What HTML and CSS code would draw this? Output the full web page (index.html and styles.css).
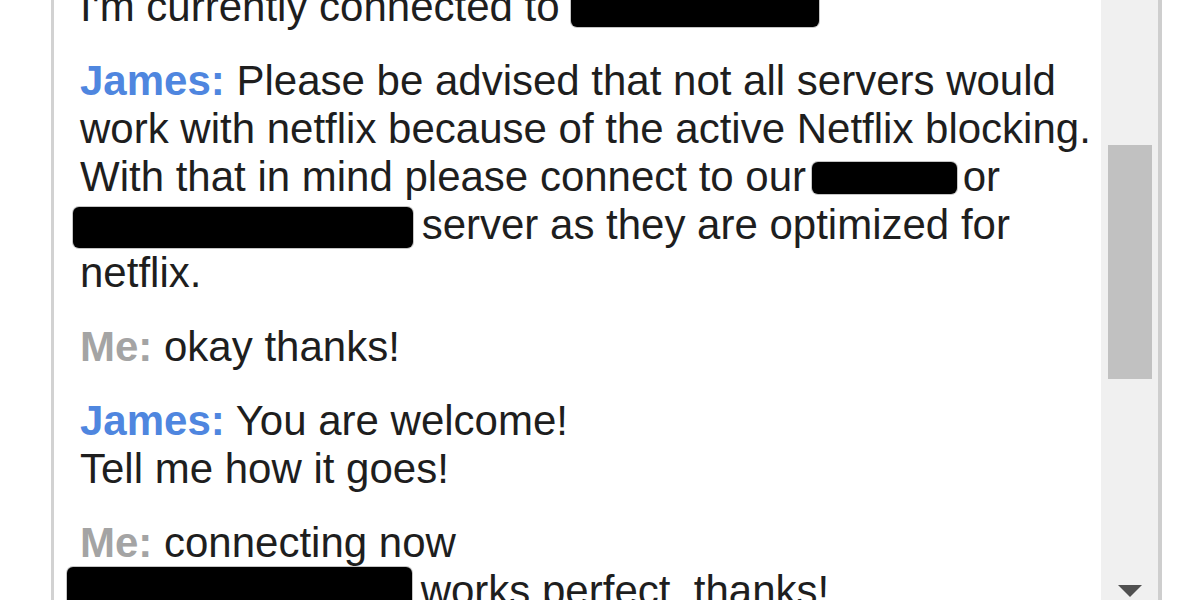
FILE: index.html
```html
<!DOCTYPE html>
<html lang="en">
<head>
<meta charset="utf-8">
<title>Chat</title>
<link rel="stylesheet" href="styles.css">
</head>
<body>
<div class="window">
  <div class="chat">
    <div class="messages">
      <p class="msg">I'm currently connected to <span class="redact r1"></span></p>
      <p class="msg"><b class="agent">James:</b> Please be advised that not all servers would<br>work with netflix because of the active Netflix blocking.<br>With that in mind please connect to our <span class="redact r3"></span>or<br><span class="redact r4"></span> server as they are optimized for<br>netflix.</p>
      <p class="msg"><b class="me">Me:</b> okay thanks!</p>
      <p class="msg"><b class="agent">James:</b> You are welcome!<br>Tell me how it goes!</p>
      <p class="msg"><b class="me">Me:</b> connecting now<br><span class="redact r5"></span> works perfect, thanks!</p>
    </div>
  </div>
  <div class="scrollbar">
    <div class="thumb"></div>
    <div class="arrow-down"></div>
  </div>
</div>
</body>
</html>
```

FILE: styles.css
```css
html, body {
  margin: 0;
  padding: 0;
  background: #ffffff;
  overflow: hidden;
}

.window {
  display: flex;
  height: 600px;
  width: 1111px;
  margin-left: 51px;
  border-left: 3px solid #d2d2d2;
  border-right: 4px solid #cecece;
  box-sizing: border-box;
  background: #ffffff;
}

.chat {
  flex: 1;
  overflow: hidden;
  padding-left: 26px;
}

.messages {
  margin-top: -17px;
  font-family: "Liberation Sans", Arial, sans-serif;
  font-size: 42px;
  line-height: 48px;
  color: #1e1e1e;
}

.msg {
  margin: 0 0 26px 0;
  white-space: nowrap;
}

.agent {
  color: #4f86df;
  font-weight: bold;
}

.me {
  color: #a4a4a4;
  font-weight: bold;
}

.redact {
  display: inline-block;
  background: #000000;
  border-radius: 6px;
  box-shadow: 0 0 0 1px rgba(90, 90, 90, 0.35);
}

.r1 {
  width: 248px;
  height: 40px;
  vertical-align: -6px;
}

.r3 {
  width: 145px;
  height: 32px;
  vertical-align: -3px;
  margin-left: -6px;
  margin-right: 6px;
}

.r4 {
  width: 340px;
  height: 41px;
  vertical-align: -9px;
  margin-left: -7px;
  margin-right: -3px;
}

.r5 {
  width: 345px;
  height: 42px;
  vertical-align: -4px;
  margin-left: -13px;
  margin-right: -3px;
}

.scrollbar {
  width: 57px;
  flex: none;
  background: #f0f0f0;
  display: flex;
  flex-direction: column;
  align-items: center;
  padding-top: 145px;
  box-sizing: border-box;
}

.thumb {
  width: 44px;
  height: 234px;
  background: #c1c1c1;
}

.arrow-down {
  margin-top: auto;
  margin-bottom: 3px;
  width: 0;
  height: 0;
  border-left: 12px solid transparent;
  border-right: 12px solid transparent;
  border-top: 12px solid #505050;
}
```
